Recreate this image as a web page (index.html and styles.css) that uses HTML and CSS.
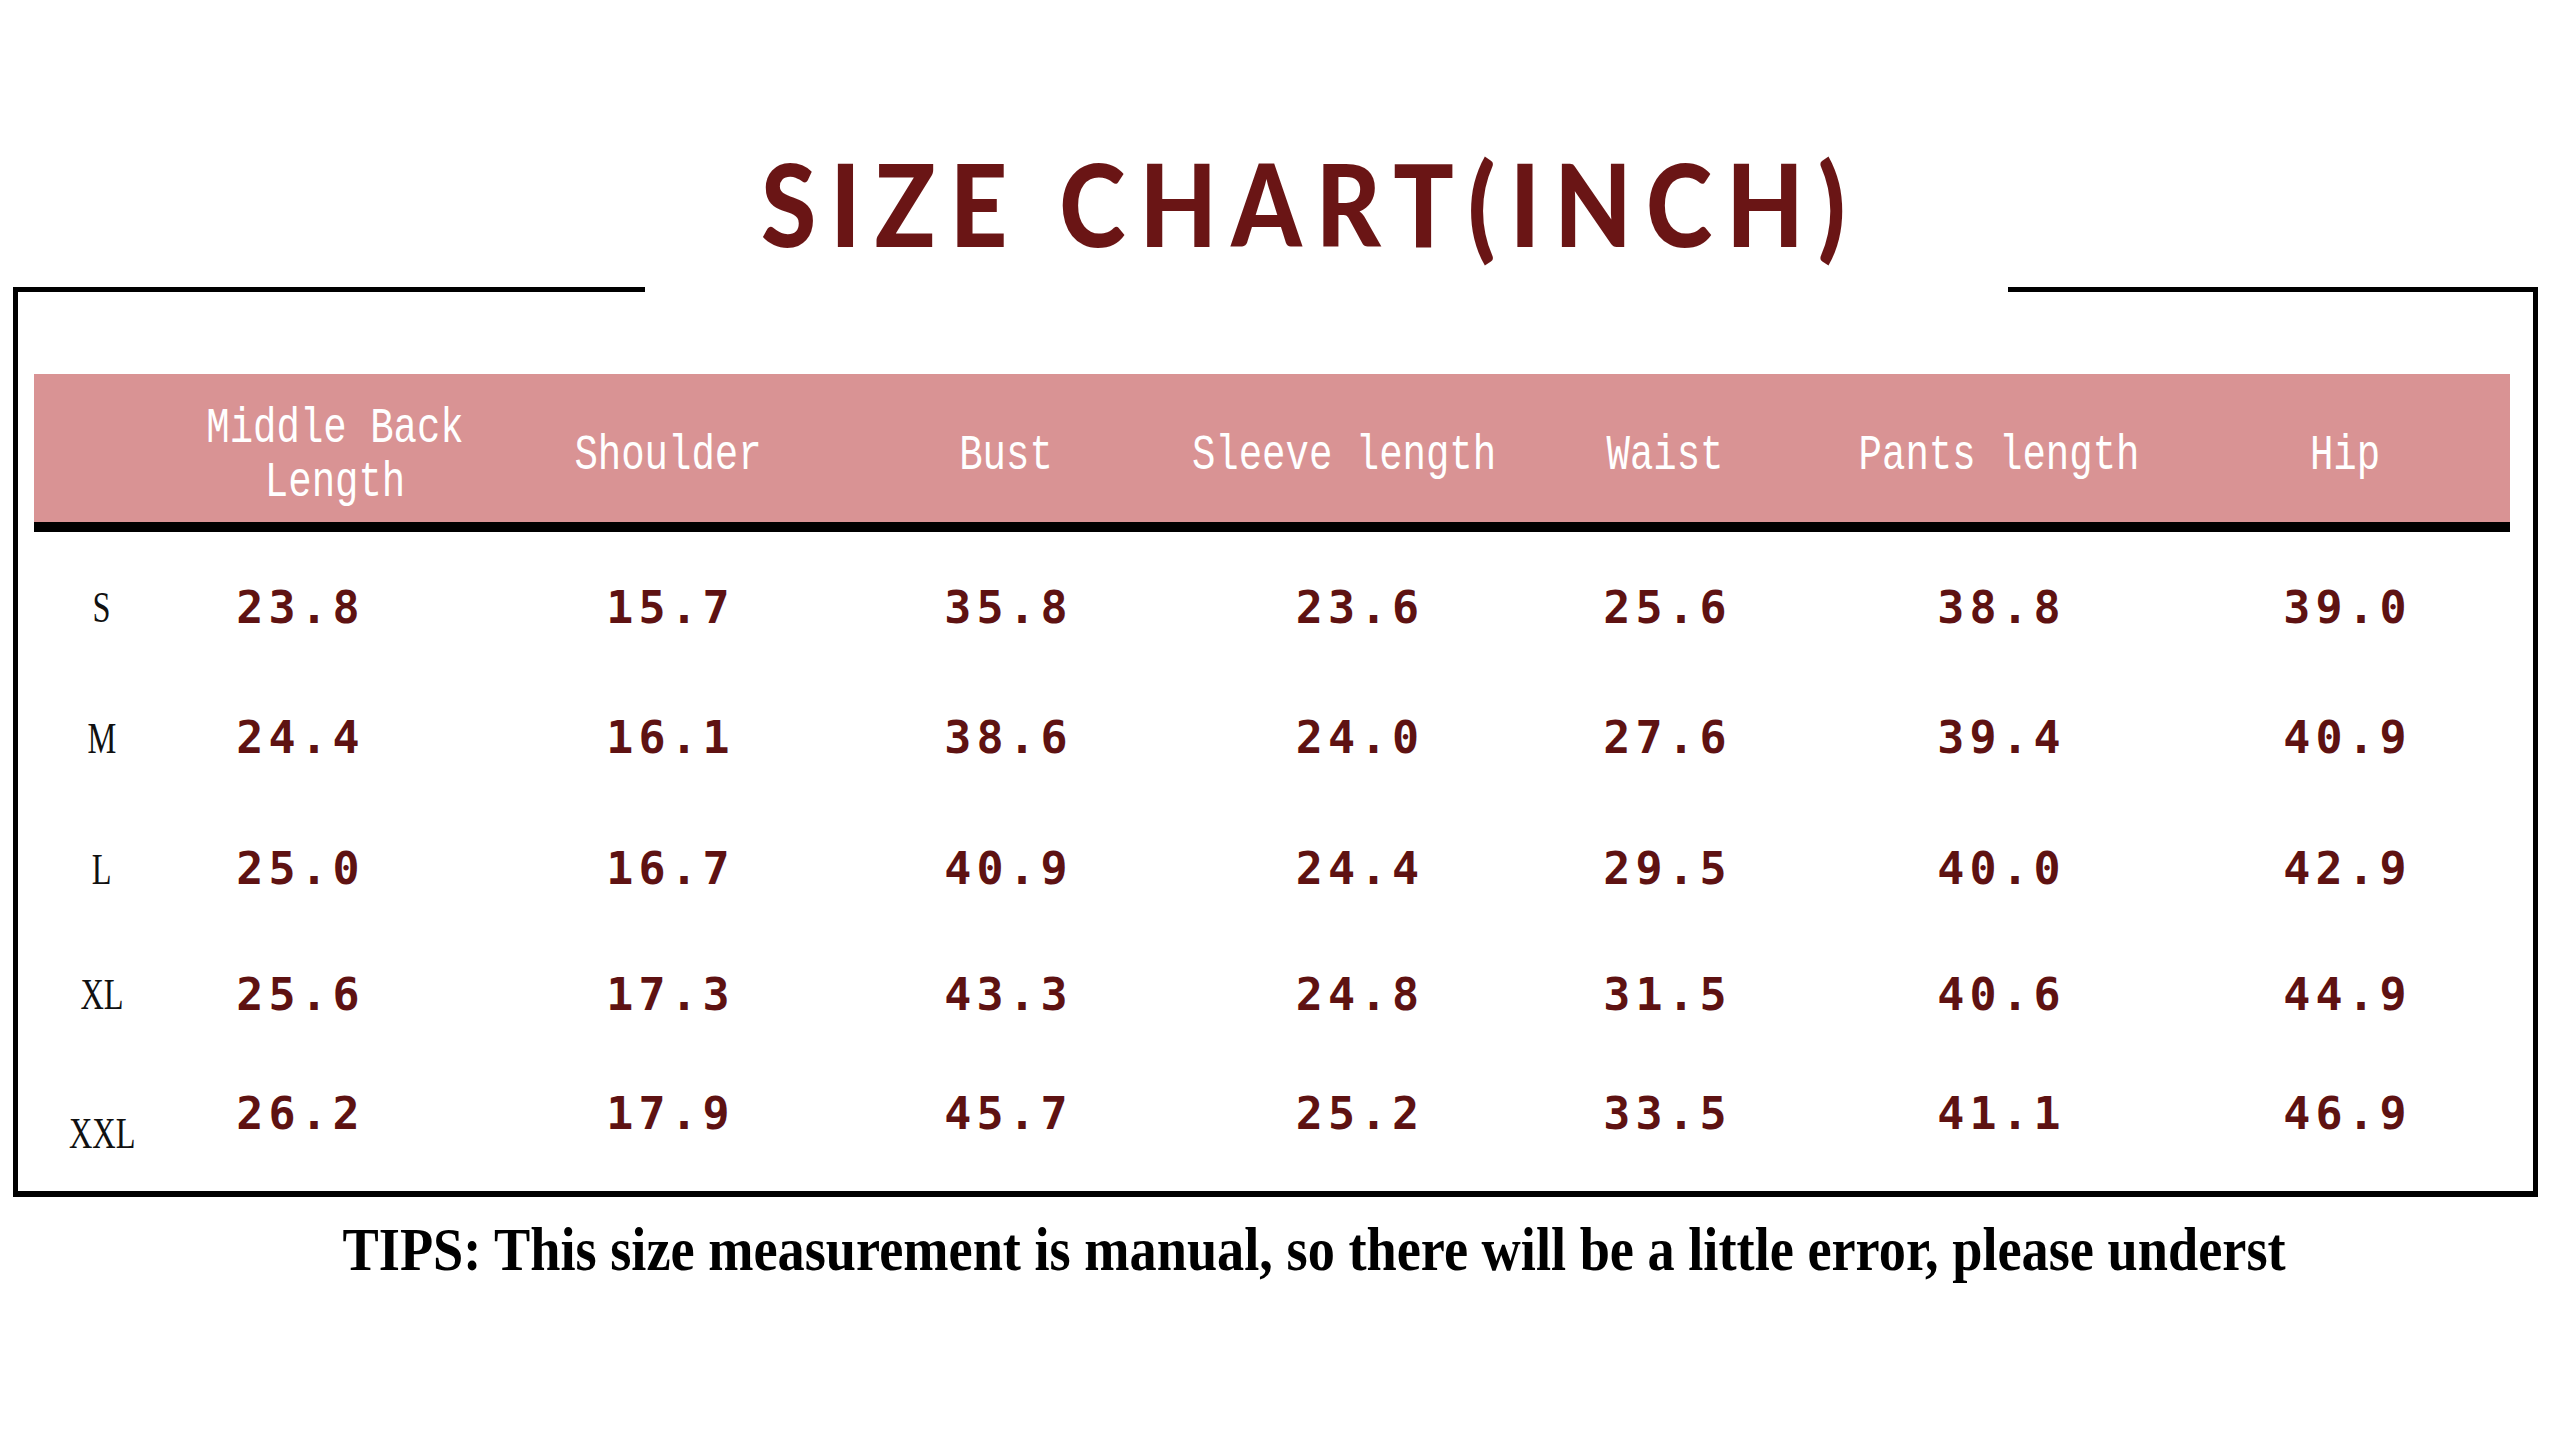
FILE: index.html
```html
<!DOCTYPE html>
<html lang="en">
<head>
<meta charset="utf-8">
<title>Size Chart (Inch)</title>
<link rel="stylesheet" href="styles.css">
</head>
<body>
<div class="page">
  <h1 class="title"><span class="title-txt">SIZE CHART(INCH)</span></h1>
  <div class="frame">
    <div class="frame-top"><span class="seg seg-left"></span><span class="seg seg-right"></span></div>
    <div class="frame-body">
      <div class="head grid">
        <div class="hcell"></div>
        <div class="hcell"><span class="htxt">Middle Back<br>Length</span></div>
        <div class="hcell"><span class="htxt">Shoulder</span></div>
        <div class="hcell"><span class="htxt">Bust</span></div>
        <div class="hcell"><span class="htxt">Sleeve length</span></div>
        <div class="hcell"><span class="htxt">Waist</span></div>
        <div class="hcell"><span class="htxt">Pants length</span></div>
        <div class="hcell"><span class="htxt">Hip</span></div>
      </div>
      <div class="rows">
        <div class="row grid">
          <div class="size"><span class="stxt">S</span></div>
          <div class="val c1">23.8</div><div class="val">15.7</div><div class="val">35.8</div><div class="val c4">23.6</div><div class="val">25.6</div><div class="val">38.8</div><div class="val">39.0</div>
        </div>
        <div class="row grid">
          <div class="size"><span class="stxt">M</span></div>
          <div class="val c1">24.4</div><div class="val">16.1</div><div class="val">38.6</div><div class="val c4">24.0</div><div class="val">27.6</div><div class="val">39.4</div><div class="val">40.9</div>
        </div>
        <div class="row grid">
          <div class="size"><span class="stxt">L</span></div>
          <div class="val c1">25.0</div><div class="val">16.7</div><div class="val">40.9</div><div class="val c4">24.4</div><div class="val">29.5</div><div class="val">40.0</div><div class="val">42.9</div>
        </div>
        <div class="row grid">
          <div class="size"><span class="stxt">XL</span></div>
          <div class="val c1">25.6</div><div class="val">17.3</div><div class="val">43.3</div><div class="val c4">24.8</div><div class="val">31.5</div><div class="val">40.6</div><div class="val">44.9</div>
        </div>
        <div class="row grid">
          <div class="size size-low"><span class="stxt">XXL</span></div>
          <div class="val c1">26.2</div><div class="val">17.9</div><div class="val">45.7</div><div class="val c4">25.2</div><div class="val">33.5</div><div class="val">41.1</div><div class="val">46.9</div>
        </div>
      </div>
    </div>
  </div>
  <p class="tips"><span class="tips-txt">TIPS: This size measurement is manual, so there will be a little error, please underst</span></p>
</div>
</body>
</html>
```
FILE: styles.css
```css
html, body {
  margin: 0;
  padding: 0;
  background: #ffffff;
}
.page {
  width: 2560px;
  height: 1437px;
  overflow: hidden;
  padding-top: 146px;
  box-sizing: border-box;
}
.title {
  margin: 0;
  height: 141px;
  text-align: center;
  padding-left: 60px;
}
.title-txt {
  display: inline-block;
  font-family: "Lato", "Open Sans", sans-serif;
  font-weight: 900;
  font-size: 114px;
  line-height: 114px;
  letter-spacing: 16px;
  color: #6a1515;
  transform: scaleX(0.88);
  white-space: nowrap;
}
.frame {
  margin-left: 13px;
  width: 2525px;
  box-sizing: border-box;
  border-left: 5px solid #000;
  border-right: 5px solid #000;
  border-bottom: 6px solid #000;
}
.frame-top {
  display: flex;
  justify-content: space-between;
  margin: 0 -5px;
  height: 5px;
}
.seg {
  display: block;
  height: 5px;
  background: #000;
}
.seg-left { width: 632px; }
.seg-right { width: 530px; }
.frame-body {
  padding: 82px 23px 19px 16px;
}
.grid {
  display: grid;
  grid-template-columns: 136px 330px 336px 340px 336px 306px 362px 330px;
}
.head {
  height: 148px;
  background: #d99394;
  border-bottom: 10px solid #000;
}
.hcell {
  display: flex;
  align-items: center;
  justify-content: center;
  padding-top: 16px;
}
.htxt {
  display: inline-block;
  font-family: "Liberation Mono", monospace;
  font-size: 50px;
  line-height: 54px;
  color: #ffffff;
  text-align: center;
  transform: scaleX(0.78);
  white-space: nowrap;
}
.rows {
  padding-top: 10px;
}
.row {
  height: 130px;
  align-items: center;
}
.row:nth-child(2), .row:nth-child(3) { height: 131px; }
.row:nth-child(4) { height: 120px; }
.row:nth-child(5) { height: 118px; }
.size {
  text-align: center;
  padding-top: 0;
}
.size-low {
  padding-top: 40px;
}
.stxt {
  display: inline-block;
  font-family: "Liberation Serif", serif;
  font-size: 45px;
  color: #111;
  transform: scaleX(0.72);
}
.val {
  text-align: center;
  font-family: "DejaVu Sans Mono", monospace;
  font-weight: bold;
  font-size: 45px;
  letter-spacing: 5px;
  color: #5e1212;
  padding-left: 5px;
}
.val.c1 { padding-right: 74px; }
.val.c4 { padding-left: 32px; }
.tips {
  margin: 12px 0 0 0;
  padding-left: 68px;
  text-align: center;
}
.tips-txt {
  display: inline-block;
  font-family: "Liberation Serif", serif;
  font-weight: bold;
  font-size: 62px;
  line-height: 80px;
  color: #000;
  transform: scaleX(0.876);
  white-space: nowrap;
}
```
